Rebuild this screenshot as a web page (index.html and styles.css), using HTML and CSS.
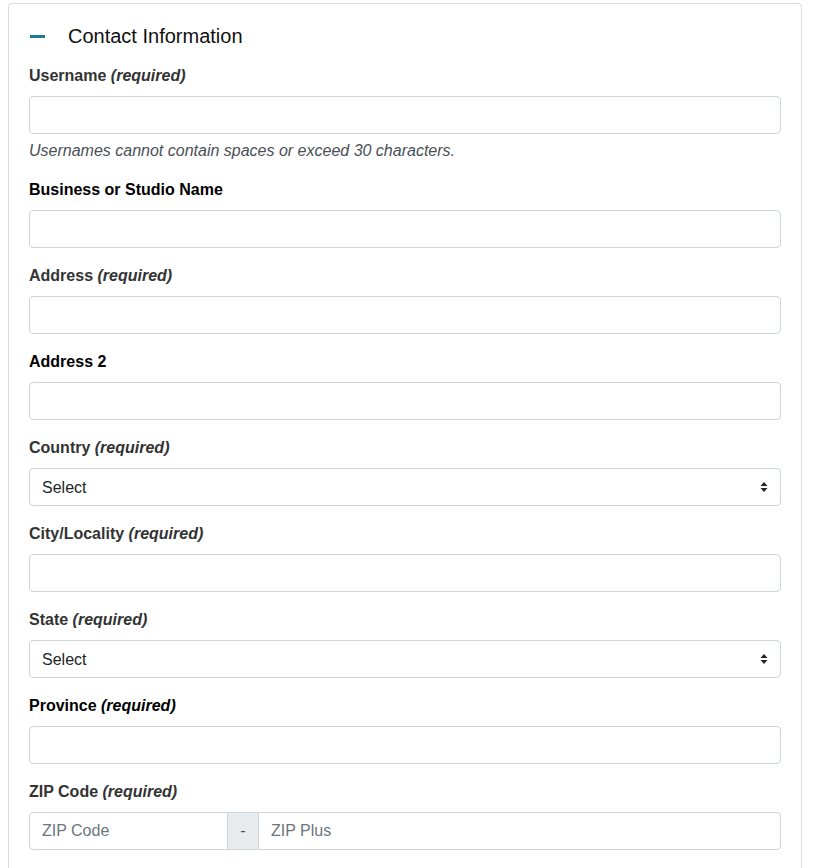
FILE: index.html
```html
<!DOCTYPE html>
<html lang="en">
<head>
<meta charset="utf-8">
<title>Contact Information</title>
<link rel="stylesheet" href="styles.css">
</head>
<body>
<section class="card">
  <header class="card-head">
    <span class="toggle" aria-hidden="true"></span>
    <h2 class="card-title">Contact Information</h2>
  </header>

  <div class="group">
    <label class="label req">Username <em>(required)</em></label>
    <input class="field" type="text">
    <p class="help">Usernames cannot contain spaces or exceed 30 characters.</p>
  </div>

  <div class="group">
    <label class="label">Business or Studio Name</label>
    <input class="field" type="text">
  </div>

  <div class="group">
    <label class="label req">Address <em>(required)</em></label>
    <input class="field" type="text">
  </div>

  <div class="group">
    <label class="label">Address 2</label>
    <input class="field" type="text">
  </div>

  <div class="group">
    <label class="label req">Country <em>(required)</em></label>
    <div class="select-wrap">
      <select class="field select"><option>Select</option></select>
      <svg class="caret" width="8" height="12" viewBox="0 0 8 12" aria-hidden="true"><path d="M4 1 L7.5 5 H0.5 Z M4 11 L0.5 7 H7.5 Z" fill="#212529"/></svg>
    </div>
  </div>

  <div class="group">
    <label class="label req">City/Locality <em>(required)</em></label>
    <input class="field" type="text">
  </div>

  <div class="group">
    <label class="label req">State <em>(required)</em></label>
    <div class="select-wrap">
      <select class="field select"><option>Select</option></select>
      <svg class="caret" width="8" height="12" viewBox="0 0 8 12" aria-hidden="true"><path d="M4 1 L7.5 5 H0.5 Z M4 11 L0.5 7 H7.5 Z" fill="#212529"/></svg>
    </div>
  </div>

  <div class="group">
    <label class="label">Province <em>(required)</em></label>
    <input class="field" type="text">
  </div>

  <div class="group">
    <label class="label req">ZIP Code <em>(required)</em></label>
    <div class="input-group">
      <input class="field zip" type="text" placeholder="ZIP Code">
      <span class="addon">-</span>
      <input class="field plus" type="text" placeholder="ZIP Plus">
    </div>
  </div>
</section>
</body>
</html>
```
FILE: styles.css
```css
html, body {
  margin: 0;
  padding: 0;
  background: #fff;
}
body {
  padding: 3px 16px 0 8px;
  font-family: "Liberation Sans", Arial, Helvetica, sans-serif;
  color: #212529;
}
.card {
  border: 1px solid #dcdcdc;
  border-bottom: none;
  border-radius: 4px 4px 0 0;
  padding: 20px 20px 20px 20px;
  min-height: 900px;
  box-sizing: border-box;
}
.card-head {
  display: flex;
  align-items: center;
  height: 24px;
  margin-bottom: 16px;
}
.toggle {
  width: 15px;
  height: 3px;
  background: #1d7c93;
  margin-left: 1px;
  margin-right: 23px;
}
.card-title {
  margin: 0;
  font-size: 20px;
  font-weight: 400;
  line-height: 24px;
  color: #111;
}
.group {
  margin-bottom: 16px;
}
.label {
  display: block;
  font-size: 16px;
  line-height: 24px;
  font-weight: 700;
  color: #000;
  margin-bottom: 8px;
}
.label.req {
  color: #333;
}
.label em {
  font-style: italic;
}
.field {
  display: block;
  width: 100%;
  height: 38px;
  box-sizing: border-box;
  border: 1px solid #ced4da;
  border-radius: 4px;
  padding: 0 12px;
  font-family: inherit;
  font-size: 16px;
  color: #212529;
  background: #fff;
  margin: 0;
}
.field::placeholder {
  color: #6c757d;
}
.help {
  margin: 5px 0 0;
  font-size: 16px;
  line-height: 23px;
  font-style: italic;
  color: #495057;
}
.select-wrap {
  position: relative;
}
.select {
  appearance: none;
  -webkit-appearance: none;
  padding-left: 12px;
}
.caret {
  position: absolute;
  right: 13px;
  top: 13px;
}
.input-group {
  display: flex;
}
.input-group .zip {
  width: 199px;
  flex: none;
  border-radius: 4px 0 0 4px;
}
.addon {
  flex: none;
  width: 30px;
  height: 38px;
  box-sizing: border-box;
  background: #e9ecef;
  border-top: 1px solid #ced4da;
  border-bottom: 1px solid #ced4da;
  display: flex;
  align-items: center;
  justify-content: center;
  font-size: 16px;
  color: #495057;
}
.input-group .plus {
  flex: 1;
  width: auto;
  border-radius: 0 4px 4px 0;
}
```
